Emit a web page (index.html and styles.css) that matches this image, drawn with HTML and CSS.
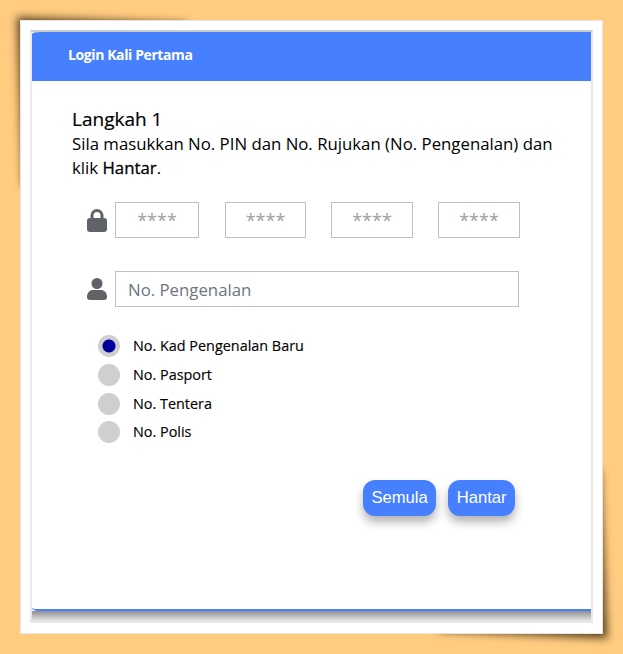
FILE: index.html
```html
<!DOCTYPE html>
<html lang="en">
<head>
    <meta charset="UTF-8">
    <title>Login Kali Pertama</title>
    <link rel="stylesheet" href="styles.css">
</head>
<body>

    <!-- Photo frame -->
    <div class="frame">
        <div class="panel">
            <div class="panel-head">Login Kali Pertama</div>

            <div class="panel-body">
                <h2 class="step-title">Langkah 1</h2>
                <p class="step-text">Sila masukkan No. PIN dan No. Rujukan (No. Pengenalan) dan klik <b>Hantar</b>.</p>

                <!-- PIN -->
                <div class="field-row pin-row">
                    <svg class="field-icon" viewBox="0 0 20 24">
                        <path d="M5 11V7.500a5 5 0 0 1 10 0V11" fill="none" stroke="#5f6368" stroke-width="3"/>
                        <rect x="0" y="10" width="20" height="14" rx="3" fill="#5f6368"/>
                    </svg>
                    <div class="pin-inputs">
                        <input class="pin pin-a" type="text" placeholder="****">
                        <input class="pin pin-b" type="text" placeholder="****">
                        <input class="pin pin-c" type="text" placeholder="****">
                        <input class="pin pin-d" type="text" placeholder="****">
                    </div>
                </div>

                <!-- No. Pengenalan -->
                <div class="field-row id-row">
                    <svg class="field-icon" viewBox="0 0 20 22">
                        <circle cx="10" cy="5.500" r="5.500" fill="#5f6368"/>
                        <path d="M0 19c0-4.500 3-7 6-7h8c3 0 6 2.500 6 7 0 2-1 3-3 3H3c-2 0-3-1-3-3z" fill="#5f6368"/>
                    </svg>
                    <input class="id-input" type="text" placeholder="No. Pengenalan">
                </div>

                <!-- Jenis pengenalan -->
                <div class="radio-list">
                    <div class="radio-item first"><span class="radio checked"></span>No. Kad Pengenalan Baru</div>
                    <div class="radio-item"><span class="radio"></span>No. Pasport</div>
                    <div class="radio-item"><span class="radio"></span>No. Tentera</div>
                    <div class="radio-item"><span class="radio"></span>No. Polis</div>
                </div>

                <div class="actions">
                    <button class="btn" type="button">Semula</button>
                    <button class="btn" type="button">Hantar</button>
                </div>
            </div>

            <div class="panel-foot"></div>
        </div>
    </div>

</body>
</html>
```

FILE: styles.css
```css
* {
    box-sizing: border-box;
}

body {
    margin: 0;
    padding: 20px 0 0 20px;
    height: 654px;
    overflow: hidden;
    background: #ffcc80;
    font-family: "Open Sans", sans-serif;
    color: #000;
}

/* Frame with lifted corners */
.frame {
    position: relative;
    width: 583px;
    height: 614px;
    padding: 9px;
    background: #fff;
    border: 1px solid #e4e4e4;
}

.frame::before,
.frame::after {
    content: "";
    position: absolute;
    z-index: -1;
    width: 170px;
    height: 170px;
    background: rgba(60, 40, 15, 0.85);
    filter: blur(4px);
}

.frame::before {
    left: 2px;
    top: 2px;
    transform-origin: 100% 100%;
    transform: skew(2deg, 2deg);
}

.frame::after {
    right: 2px;
    bottom: 2px;
    transform-origin: 0 0;
    transform: skew(2.500deg, 2.500deg);
}

/* Panel */
.panel {
    display: flex;
    flex-direction: column;
    height: 593px;
    border: 2px solid #e8e8e8;
    border-top-color: #c9c9c9;
    background: #fff;
}

.panel-head {
    height: 49px;
    padding-left: 36px;
    background: #4680ff;
    border-top-left-radius: 8px 2px;
    color: #fff;
    font-size: 14px;
    font-weight: 700;
    line-height: 46px;
    letter-spacing: -0.4px;
}

.panel-body {
    flex: 1;
    padding: 26px 30px 0 40px;
    background: #fff;
    border-bottom: 2px solid #4680ff;
    border-bottom-left-radius: 6px 3px;
}

.step-title {
    margin: 0;
    font-size: 19px;
    font-weight: 400;
    line-height: 25px;
    -webkit-text-stroke: 0.2px #000;
}

.step-text {
    margin: 0;
    font-size: 16.800px;
    line-height: 24px;
}

.step-text b {
    font-weight: 400;
    -webkit-text-stroke: 0.3px #000;
}

.field-row {
    display: flex;
    align-items: center;
}

.pin-row {
    margin: 22px 0 0 15px;
}

.id-row {
    margin: 33px 0 0 15px;
}

.field-icon {
    width: 20px;
    flex: none;
    margin-right: 8px;
}

.pin-inputs {
    display: flex;
}

input {
    height: 36px;
    border: 1px solid #bfbfbf;
    background: #fff;
    font-family: "Open Sans", sans-serif;
    font-size: 16.800px;
    color: #444;
    outline: none;
}

input::placeholder {
    color: #6c757d;
    opacity: 1;
}

.pin {
    padding: 0;
    text-align: center;
}

.pin::placeholder {
    color: #a0a0a0;
    font-size: 18px;
}

.pin-a { width: 84px; }
.pin-b { width: 81px; margin-left: 26px; }
.pin-c { width: 82px; margin-left: 25px; }
.pin-d { width: 82px; margin-left: 25px; }

.id-input {
    width: 404px;
    padding: 0 12px;
}

/* Radio list */
.radio-list {
    margin: 24px 0 0 26px;
}

.radio-item {
    display: flex;
    align-items: center;
    height: 28.500px;
    padding-bottom: 1px;
    font-size: 14.400px;
    -webkit-text-stroke: 0.15px #000;
}

.radio-item.first {
    height: 30px;
}

.radio {
    flex: none;
    width: 22px;
    height: 22px;
    margin: 1px 13px 0 0;
    border-radius: 50%;
    background: #cfcfcf;
}

.radio.checked {
    background: radial-gradient(circle, #00009c 0 6px, #cfcfcf 7px);
}

/* Buttons */
.actions {
    display: flex;
    justify-content: flex-end;
    gap: 12px;
    margin: 33px 46px 0 0;
}

.btn {
    height: 36px;
    padding: 0 8.500px;
    border: none;
    border-radius: 12px;
    background: #4680ff;
    color: #fff;
    font-family: "Liberation Sans", Arial, sans-serif;
    font-size: 16.600px;
    box-shadow: 0 6px 10px rgba(0, 0, 0, 0.3);
}

/* Grey fade under the panel */
.panel-foot {
    height: 10px;
    background: linear-gradient(#8f8f8f, #e6e6e6);
}
```
